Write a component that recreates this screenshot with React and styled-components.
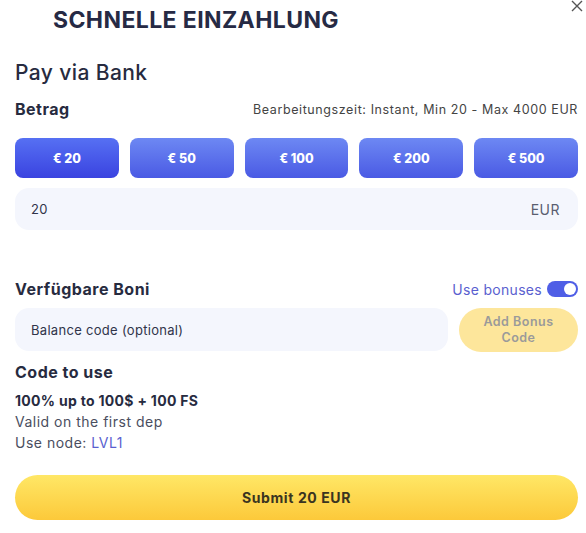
import styled, { createGlobalStyle } from "styled-components";

const GlobalStyle = createGlobalStyle`
  * { box-sizing: border-box; }
  body {
    margin: 0;
    background: #ffffff;
    font-family: "Inter", "Noto Sans", sans-serif;
    color: #272b3f;
  }
`;

const amounts = [20, 50, 100, 200, 500];

const Modal = styled.div`
  position: relative;
  width: 586px;
  height: 533px;
  padding: 0 8px 0 15px;
  overflow: hidden;
`;

const Header = styled.h1`
  margin: 0;
  padding: 6px 0 0 38px;
  height: 44px;
  font-size: 23px;
  font-weight: 700;
  letter-spacing: 0.4px;
  color: #262a44;
`;

const CloseButton = styled.button`
  position: absolute;
  top: 0;
  right: 2px;
  width: 14px;
  height: 14px;
  padding: 0;
  border: none;
  background: none;
  cursor: pointer;
`;

const Method = styled.h2`
  margin: 16px 0 0;
  font-size: 21px;
  font-weight: 500;
  letter-spacing: 0.4px;
  color: #272b3f;
`;

const Row = styled.div`
  display: flex;
  align-items: center;
  justify-content: space-between;
  margin-top: ${(p) => p.$gap || 0}px;
`;

const SectionTitle = styled.h3`
  margin: 0;
  font-size: 16px;
  font-weight: 700;
  letter-spacing: 0.5px;
  color: #272b3f;
`;

const Hint = styled.span`
  font-size: 12.5px;
  letter-spacing: 0.6px;
  color: #444;
`;

const AmountRow = styled.div`
  display: grid;
  grid-template-columns: repeat(5, 1fr);
  gap: 11px;
  margin-top: 19px;
`;

const AmountButton = styled.button`
  height: 40px;
  border: none;
  border-radius: 8px;
  font-family: inherit;
  font-size: 12.5px;
  font-weight: 800;
  color: #fff;
  background: ${(p) =>
    p.$active
      ? "linear-gradient(180deg, #5670f3 0%, #3a43e0 100%)"
      : "linear-gradient(180deg, #6d88f3 0%, #4a5ae4 100%)"};
  cursor: pointer;
`;

const Field = styled.div`
  display: flex;
  align-items: center;
  justify-content: space-between;
  height: ${(p) => p.$h || 42}px;
  margin-top: ${(p) => p.$gap || 0}px;
  padding: 0 18px 0 16px;
  border-radius: 14px;
  background: #f4f6fd;
  font-size: 13px;
  letter-spacing: 0.3px;
  color: #30344a;
`;

const Unit = styled.span`
  font-size: 14px;
  letter-spacing: 0.5px;
  color: #5a5e70;
`;

const Toggle = styled.label`
  display: flex;
  align-items: center;
  gap: 5px;
  font-size: 14px;
  letter-spacing: 0.3px;
  color: #5a5fcf;
`;

const Switch = styled.span`
  position: relative;
  width: 31px;
  height: 16px;
  border-radius: 8px;
  background: #4f5ee6;

  &::after {
    content: "";
    position: absolute;
    top: 2px;
    right: 2px;
    width: 12px;
    height: 12px;
    border-radius: 50%;
    background: #fff;
  }
`;

const BonusRow = styled.div`
  display: grid;
  grid-template-columns: 1fr 119px;
  gap: 11px;
  margin-top: 9px;
`;

const AddButton = styled.button`
  height: 44px;
  border: none;
  border-radius: 22px;
  background: #fde69b;
  font-family: inherit;
  font-size: 12.5px;
  font-weight: 600;
  letter-spacing: 0.5px;
  line-height: 16px;
  color: #9a9a9a;
`;

const Offer = styled.div`
  margin-top: 10px;
`;

const OfferTitle = styled.div`
  margin-top: 10px;
  font-size: 14px;
  font-weight: 700;
  letter-spacing: 0.3px;
  color: #272b3f;
`;

const OfferLine = styled.div`
  margin-top: 4px;
  font-size: 14px;
  letter-spacing: 0.5px;
  color: #4a4e60;
`;

const Code = styled.span`
  color: #5a5fcf;
`;

const Submit = styled.button`
  display: block;
  width: 100%;
  height: 45px;
  margin-top: 24px;
  border: none;
  border-radius: 23px;
  background: linear-gradient(180deg, #ffe766 0%, #fcc93a 100%);
  font-family: inherit;
  font-size: 14px;
  font-weight: 700;
  letter-spacing: 0.6px;
  color: #3a3420;
  cursor: pointer;
`;

export default function App() {
  return (
    <>
      <GlobalStyle />
      <Modal>
        <Header>SCHNELLE EINZAHLUNG</Header>
        <CloseButton aria-label="close">
          <svg width="12" height="12" viewBox="0 0 12 12">
            <path d="M1 1L11 11M11 1L1 11" stroke="#555" strokeWidth="1.4" />
          </svg>
        </CloseButton>

        <Method>Pay via Bank</Method>

        <Row $gap={14}>
          <SectionTitle>Betrag</SectionTitle>
          <Hint>Bearbeitungszeit: Instant, Min 20 - Max 4000 EUR</Hint>
        </Row>

        <AmountRow>
          {amounts.map((a) => (
            <AmountButton key={a} $active={a === 20}>
              € {a}
            </AmountButton>
          ))}
        </AmountRow>

        <Field $gap={10}>
          <span>20</span>
          <Unit>EUR</Unit>
        </Field>

        <Row $gap={49}>
          <SectionTitle>Verfügbare Boni</SectionTitle>
          <Toggle>
            Use bonuses
            <Switch />
          </Toggle>
        </Row>

        <BonusRow>
          <Field $h={43}>Balance code (optional)</Field>
          <AddButton>
            Add Bonus
            <br />
            Code
          </AddButton>
        </BonusRow>

        <Offer>
          <SectionTitle>Code to use</SectionTitle>
          <OfferTitle>100% up to 100$ + 100 FS</OfferTitle>
          <OfferLine>Valid on the first dep</OfferLine>
          <OfferLine>
            Use node: <Code>LVL1</Code>
          </OfferLine>
        </Offer>

        <Submit>Submit 20 EUR</Submit>
      </Modal>
    </>
  );
}
